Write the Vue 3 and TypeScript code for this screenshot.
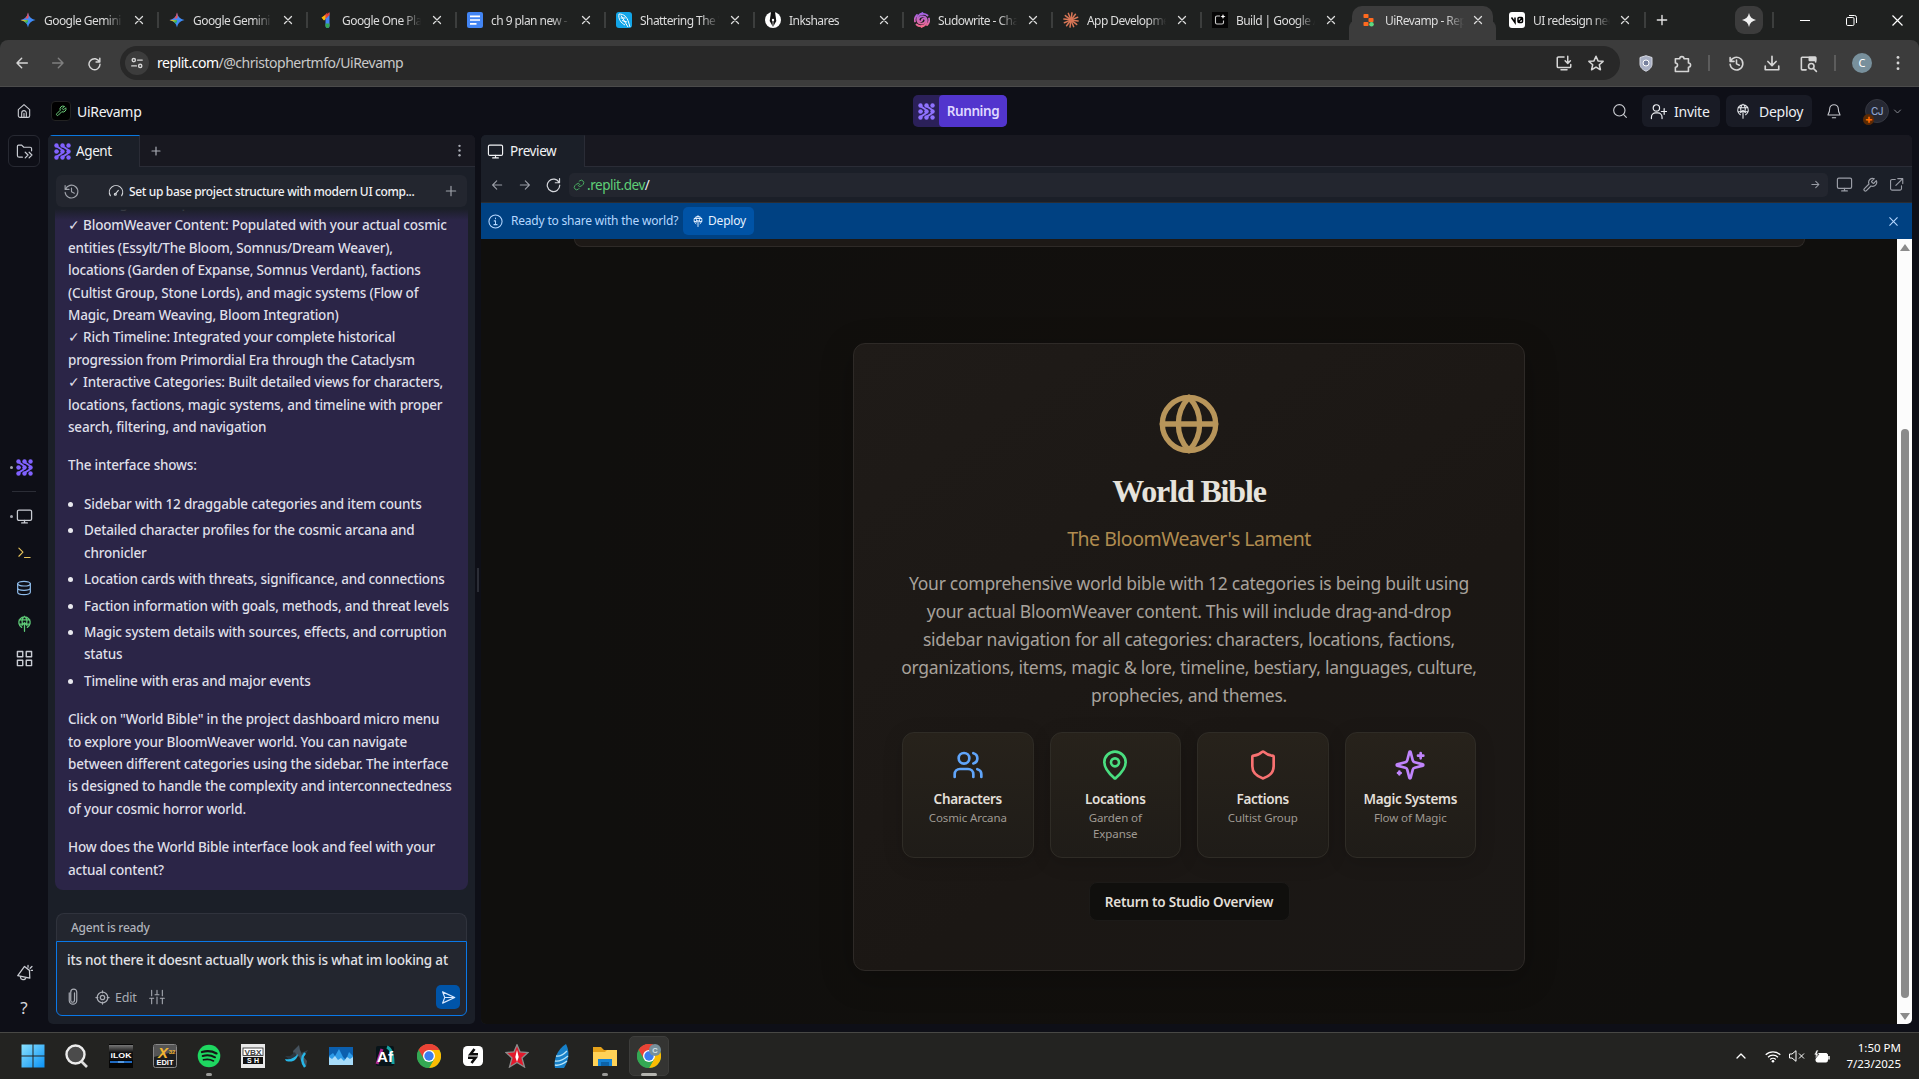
<script setup lang="ts">
import { h, type FunctionalComponent } from 'vue'

const paths: Record<string, string> = {
  x: '<path d="M5 5l14 14M19 5L5 19"/>',
  plus: '<path d="M12 4v16M4 12h16"/>',
  back: '<path d="M20 12H5M11.500 5L4.500 12l7 7"/>',
  fwd: '<path d="M4 12h15M12.500 5l7 7-7 7"/>',
  reload: '<path d="M20.500 3.500v6h-6M20 9.500A8.800 8.800 0 1 0 20.800 13"/>',
  dots: '<g fill="currentColor" stroke="none"><circle cx="12" cy="4.500" r="1.900"/><circle cx="12" cy="12" r="1.900"/><circle cx="12" cy="19.500" r="1.900"/></g>',
  tune: '<circle cx="6.500" cy="7" r="2.800"/><path d="M13 7h8M3 17h8"/><circle cx="17.500" cy="17" r="2.800"/>',
  install: '<path d="M12 4H4.500A1.500 1.500 0 0 0 3 5.500v11A1.500 1.500 0 0 0 4.500 18h15a1.500 1.500 0 0 0 1.500-1.500V14M8 21h8M17 3v9M13.500 9l3.500 3.500L20.500 9"/>',
  star: '<path d="M12 3l2.700 6.200 6.800.6-5.100 4.500 1.500 6.700-5.900-3.500L6.100 21l1.500-6.700-5.100-4.500 6.800-.6z"/>',
  puzzle: '<path d="M3 6h5.500a2.700 2.700 0 1 1 5.400 0h5.600v5.300a2.700 2.700 0 1 1 0 5.400V22H3v-5.300a2.700 2.700 0 1 0 0-5.400z"/>',
  history: '<path d="M3 3.500v5.500h5.500M3.500 9A9 9 0 1 1 3 13M12 7v5.500l4 2"/>',
  download: '<path d="M12 3v12M6.500 10l5.500 5.500L17.500 10M3 16v5h18v-5"/>',
  lens: '<path d="M9 20H4a1 1 0 0 1-1-1V5a1 1 0 0 1 1-1h16a1 1 0 0 1 1 1v5"/><path fill="currentColor" d="M13 4h8v4h-8z"/><circle cx="15.500" cy="15.500" r="3.500"/><path d="M18 18l4 4"/>',
  home: '<path d="M3.500 10L12 2.500l8.500 7.500v9a2.500 2.500 0 0 1-2.500 2.500H6A2.500 2.500 0 0 1 3.500 19zM8.500 21.500V15a3.500 3.500 0 0 1 7 0v6.500M12 15.500v6"/>',
  wrench: '<path d="M14.700 6.300a1 1 0 0 0 0 1.400l1.600 1.600a1 1 0 0 0 1.400 0l3.770-3.770a6 6 0 0 1-7.940 7.940l-6.910 6.910a2.120 2.120 0 0 1-3-3l6.910-6.910a6 6 0 0 1 7.940-7.940z"/>',
  search: '<circle cx="11" cy="11" r="8.500"/><path d="M17.500 17.500L21.500 21.500"/>',
  invite: '<circle cx="9" cy="7" r="4.500"/><path d="M2 22v-2a6 6 0 0 1 6-6h3a6 6 0 0 1 6 6v2M20 8v8M16 12h8"/>',
  deploy: '<path d="M8 17.500a8 8 0 1 1 8 0M4.500 7h15M4.500 13h4M15.500 13h4M9 12c-1-4 0-8 3-10M15 12c1-4 0-8-3-10M12 23V11M8.500 14.500L12 11l3.500 3.500"/>',
  bell: '<path d="M5.500 9a6.500 6.500 0 0 1 13 0c0 6 2.500 7 2.500 9H3C3 16 5.500 15 5.500 9M9.500 22h5"/>',
  down: '<path d="M4 8l8 8 8-8"/>',
  up: '<path d="M4 16l8-8 8 8"/>',
  folder: '<path d="M9 20H4.500A2.500 2.500 0 0 1 2 17.500v-13A1.500 1.500 0 0 1 3.500 3H8l3 3h9a2 2 0 0 1 2 2v3M13 13l4 4-4 4M18.500 13l4 4-4 4"/>',
  monitor: '<rect x="2" y="3" width="20" height="14.500" rx="2"/><path d="M12 17.500V21M8 21h8"/>',
  shell: '<path d="M3 5l6.500 6.500L3 18M12 20h9"/>',
  db: '<ellipse cx="12" cy="5.500" rx="9.500" ry="3.500"/><path d="M2.500 5.500v13c0 2 4 3.500 9.500 3.500s9.500-1.500 9.500-3.500v-13M2.500 12c0 2 4 3.500 9.500 3.500s9.500-1.500 9.500-3.500"/>',
  grid: '<path d="M2 2h7.500v7.500H2zM14.500 2H22v7.500h-7.500zM2 14.500h7.500V22H2zM14.500 14.500H22V22h-7.500z"/>',
  horn: '<path d="M12 3.500L2.500 16.500l17 3.500L19 9zM6.500 17.500a3.500 3.500 0 0 0 7.500 1.500M17 4.500V2M20 6l2.500-2.500M21.500 9H24"/>',
  gauge: '<path d="M3.500 19A10 10 0 1 1 20.500 19M11 16.500L15.500 11"/><circle cx="11" cy="16.800" r="1.500"/>',
  clip: '<path d="M7 7v10a5 5 0 0 0 10 0V6a4 4 0 0 0-8 0v11a2 2 0 0 0 5 0V7" transform="translate(0 -.5)"/>',
  target: '<circle cx="12" cy="12" r="8.500"/><circle cx="12" cy="12" r="3.500"/><path d="M12 1.500v3M12 19.500v3M1.500 12h3M19.500 12h3"/>',
  sliders: '<path d="M4 2v8M1 14h6M4 14v8M12 2v5M9 8.500h6M12 12v10M20 2v8M17 14h6M20 14v8"/>',
  send: '<path d="M2.500 3L22 12 2.500 21 6 12zM6 12h16"/>',
  link: '<path d="M10 13a5 5 0 0 0 7.500.5l3-3a5 5 0 0 0-7-7L12 5M14 11a5 5 0 0 0-7.500-.5l-3 3a5 5 0 0 0 7 7L12 19"/>',
  info: '<circle cx="12" cy="12" r="10.500"/><path d="M12 17v-6h-2M9.500 17h5M12 6.500v1"/>',
  external: '<path d="M10 4H5a2.500 2.500 0 0 0-2.500 2.500v12A2.500 2.500 0 0 0 5 21h12.500a2.500 2.500 0 0 0 2.500-2.500V14M14 2.500h8v8M22 2.500L11 13.500"/>',
  globe: '<circle cx="12" cy="12" r="10"/><path d="M12 2a14.500 14.500 0 0 0 0 20 14.500 14.500 0 0 0 0-20M2 12h20"/>',
  users: '<path d="M16 21v-2a4 4 0 0 0-4-4H6a4 4 0 0 0-4 4v2M22 21v-2a4 4 0 0 0-3-3.870M16 3.130a4 4 0 0 1 0 7.750"/><circle cx="9" cy="7" r="4"/>',
  pin: '<path d="M20 10c0 4.993-5.539 10.193-7.399 11.799a1 1 0 0 1-1.202 0C9.539 20.193 4 14.993 4 10a8 8 0 0 1 16 0"/><circle cx="12" cy="10" r="3"/>',
  shield: '<path d="M20 13c0 5-3.500 7.500-7.660 8.950a1 1 0 0 1-.67-.01C7.500 20.500 4 18 4 13V6a1 1 0 0 1 1-1c2 0 4.500-1.200 6.240-2.720a1.170 1.170 0 0 1 1.520 0C14.510 3.810 17 5 19 5a1 1 0 0 1 1 1z"/>',
  sparkles: '<path d="M9.937 15.500A2 2 0 0 0 8.500 14.063l-6.135-1.582a.5.5 0 0 1 0-.962L8.500 9.936A2 2 0 0 0 9.937 8.500l1.582-6.135a.5.5 0 0 1 .963 0L14.063 8.500A2 2 0 0 0 15.500 9.937l6.135 1.581a.5.5 0 0 1 0 .964L15.500 14.063a2 2 0 0 0-1.437 1.437l-1.582 6.135a.5.5 0 0 1-.963 0zM20 3v4M22 5h-4M4 17v2M5 18H3"/>',
  agent: '<g fill="currentColor" stroke="none"><circle cx="3.500" cy="3.500" r="3.100"/><circle cx="12" cy="3.500" r="3.100"/><circle cx="20.500" cy="3.500" r="3.100"/><circle cx="3.500" cy="12" r="3.100"/><circle cx="12" cy="12" r="3.100"/><circle cx="20.500" cy="12" r="3.100"/><circle cx="3.500" cy="20.500" r="3.100"/><circle cx="12" cy="20.500" r="3.100"/><circle cx="20.500" cy="20.500" r="3.100"/></g><path d="M3.500 3.500C6 8.500 12 7 12 12s-6 3.500-8.500 8.500M12 3.500c2.500 5 8.500 3.500 8.500 8.500s-6 3.500-8.500 8.500M3.500 12h2"/>',
}
const Ico: FunctionalComponent<{ n: string; s?: number; w?: number }> = (p) =>
  h('svg', {
    width: p.s ?? 16, height: p.s ?? 16, viewBox: '0 0 24 24', fill: 'none', stroke: 'currentColor',
    'stroke-width': p.w ?? 1.6, 'stroke-linecap': 'round', 'stroke-linejoin': 'round',
    style: 'display:block;flex:none', innerHTML: paths[p.n],
  })
Ico.props = ['n', 's', 'w']

const gem = '<defs><linearGradient id="gm" x1="0" y1="0" x2="1" y2="1"><stop offset="0.15" stop-color="#f04a50"/><stop offset=".35" stop-color="#4c86f5"/><stop offset=".7" stop-color="#3b8cf7"/><stop offset="1" stop-color="#3b8cf7"/></linearGradient><linearGradient id="gn" x1="0" y1=".3" x2=".6" y2="1"><stop offset="0" stop-color="#fbc31b"/><stop offset=".6" stop-color="#1fae68"/><stop offset=".85" stop-color="#3b8cf7" stop-opacity="0"/></linearGradient></defs><path fill="url(#gm)" d="M8 .5C9 5 11 7 15.500 8 11 9 9 11 8 15.500 7 11 5 9 .5 8 5 7 7 5 8 .5"/><path fill="url(#gn)" d="M.5 8H8v7.500C7 11 5 9 .5 8"/><path fill="#ee4d50" d="M8 .5C9 5 8.500 6 8 6.500L5 6.500C6.500 5.500 7.500 3.500 8 .5"/>'
const rays = Array.from({ length: 12 }, (_, i) => `<path transform="rotate(${i * 30 + 8} 8 8)" d="M8 7V.8"/>`).join('')
const fav: Record<string, string> = {
  gem,
  one: '<path fill="#ea4335" d="M4 5.500L9.500.5 8 6 5.500 8z"/><path fill="#fbbc04" d="M3.500 5.500l4-2.500 1.500 3-3 2.500z"/><path fill="#4285f4" d="M7.500 5L11.500.5V14a2 2 0 0 1-4 0z"/><path fill="#34a853" d="M7.500 11.500h4V14a2 2 0 0 1-4 0z"/><path fill="#ea4335" d="M7.500 3.500l4-3.500v3l-4 4z"/>',
  doc: '<rect width="16" height="16" rx="2" fill="#4285f4"/><path stroke="#fff" stroke-width="1.700" d="M3 4.300h10M3 8h10M3 11.800h6.500"/>',
  feather: '<rect width="16" height="16" rx="3" fill="#12a5e8"/><path d="M3 2c5 0 8 3 9.500 8L14 15M3 2c-1 5 2 9 6 11M5 3.500L12 15M6 8.500l5 1.500M4.500 6h5" stroke="#fff" fill="none"/>',
  ink: '<circle cx="8" cy="8" r="8" fill="#fff"/><path d="M6 0h4l1.300 9L8 15 4.700 9z" fill="#111"/><circle cx="8" cy="8" r="1.200" fill="#fff"/><path d="M8 9v6" stroke="#fff" stroke-width=".7"/>',
  sudo: '<defs><linearGradient id="sd" gradientUnits="userSpaceOnUse" x1="8" y1="0" x2="8" y2="16"><stop stop-color="#9a62f2"/><stop offset="1" stop-color="#ff6b83"/></linearGradient></defs><g fill="none" stroke="url(#sd)" stroke-width="1.800" stroke-linecap="round"><path d="M8 8c0-2 3.500-2 3.500.6C11.500 12 5 13 3.500 9 2.500 5.500 5 2.500 8.500 1"/><path d="M8 8c0 2-3.500 2-3.500-.6C4.500 4 11 3 12.500 7 13.500 10.500 11 13.500 7.500 15"/><path d="M2.500 12.500c2 1.800 4.500 2 7 .9M13.500 3.500c-2-1.800-4.500-2-7-.9M15 6.500c.6 2 0 4.500-2 6.500M1 9.500c-.6-2 0-4.500 2-6.500"/></g>',
  claude: `<g stroke="#d97757" stroke-width="1.500" stroke-linecap="round">${rays}</g>`,
  build: '<rect width="16" height="16" fill="#050505"/><path d="M8 4H5a1.500 1.500 0 0 0-1.500 1.500v5A1.500 1.500 0 0 0 5 12h5a1.500 1.500 0 0 0 1.500-1.500V8.500" stroke="#ccc" fill="none" stroke-width="1.100"/><path fill="#fff" d="M11 2l.7 1.800 1.800.7-1.800.7L11 7l-.7-1.800-1.800-.7 1.800-.7z"/>',
  replit: '<rect x="2.500" y="2" width="5" height="4" rx=".8" fill="#ff6a1f"/><rect x="7.500" y="6" width="5" height="4" rx=".8" fill="#ff6a1f"/><rect x="2.500" y="10" width="5" height="4" rx=".8" fill="#ff6a1f"/><circle cx="10.500" cy="12.200" r="2.300" fill="#5fd981"/>',
  v0: '<rect width="16" height="16" rx="3" fill="#fff"/><path d="M2.500 5.500L6 10.500V5.500M9 6.500A1 1 0 0 1 10 5.500h2.500A1 1 0 0 1 13.500 6.500v3A1 1 0 0 1 12.500 10.500H10A1 1 0 0 1 9 9.500zM9.500 10l3.500-4" stroke="#000" stroke-width="1.500" fill="none"/>',
}
const tabs = [
  { f: 'gem', t: 'Google Gemini' }, { f: 'gem', t: 'Google Gemini' }, { f: 'one', t: 'Google One Plans' },
  { f: 'doc', t: 'ch 9 plan new - G' }, { f: 'feather', t: 'Shattering The V' }, { f: 'ink', t: 'Inkshares' },
  { f: 'sudo', t: 'Sudowrite - Chat' }, { f: 'claude', t: 'App Development' }, { f: 'build', t: 'Build | Google A' },
  { f: 'replit', t: 'UiRevamp - Rep' }, { f: 'v0', t: 'UI redesign need' },
]

const intro = [
  'with drag-and-drop',
  '✓ BloomWeaver Content: Populated with your actual cosmic', 'entities (Essylt/The Bloom, Somnus/Dream Weaver),',
  'locations (Garden of Expanse, Somnus Verdant), factions', '(Cultist Group, Stone Lords), and magic systems (Flow of',
  'Magic, Dream Weaving, Bloom Integration)', '✓ Rich Timeline: Integrated your complete historical',
  'progression from Primordial Era through the Cataclysm', '✓ Interactive Categories: Built detailed views for characters,',
  'locations, factions, magic systems, and timeline with proper', 'search, filtering, and navigation',
]
const bullets = [
  ['Sidebar with 12 draggable categories and item counts'],
  ['Detailed character profiles for the cosmic arcana and', 'chronicler'],
  ['Location cards with threats, significance, and connections'],
  ['Faction information with goals, methods, and threat levels'],
  ['Magic system details with sources, effects, and corruption', 'status'],
  ['Timeline with eras and major events'],
]
const outro = [
  'Click on "World Bible" in the project dashboard micro menu', 'to explore your BloomWeaver world. You can navigate',
  'between different categories using the sidebar. The interface', 'is designed to handle the complexity and interconnectedness',
  'of your cosmic horror world.',
]
const question = ['How does the World Bible interface look and feel with your', 'actual content?']
const about = [
  'Your comprehensive world bible with 12 categories is being built using',
  'your actual BloomWeaver content. This will include drag-and-drop',
  'sidebar navigation for all categories: characters, locations, factions,',
  'organizations, items, magic & lore, timeline, bestiary, languages, culture,',
  'prophecies, and themes.',
]
const cards = [
  { i: 'users', c: '#60a5fa', t: 'Characters', s: ['Cosmic Arcana'] },
  { i: 'pin', c: '#4ade80', t: 'Locations', s: ['Garden of', 'Expanse'] },
  { i: 'shield', c: '#f87171', t: 'Factions', s: ['Cultist Group'] },
  { i: 'sparkles', c: '#c084fc', t: 'Magic Systems', s: ['Flow of Magic'] },
]

const chrome = '<circle cx="12" cy="12" r="12" fill="#34a853"/><path fill="#ea4335" d="M12 12L1.600 6A12 12 0 0 1 22.400 6z"/><path fill="#fbbc04" d="M12 6h10.400A12 12 0 0 1 12 24l5-9z"/><path fill="#ea4335" d="M1.600 6A12 12 0 0 1 22.400 6H12l-5.200 9z"/><path fill="#34a853" d="M1.600 6A12 12 0 0 0 12 24l5.200-9H6.800z"/><circle cx="12" cy="12" r="6" fill="#fff"/><circle cx="12" cy="12" r="4.700" fill="#3b7df0"/>'
const sans = 'font-family="Liberation Sans, sans-serif" font-weight="700" text-anchor="middle"'
const apps: { svg: string; run?: boolean; on?: boolean }[] = [
  { svg: '<defs><linearGradient id="w" x2="1" y2="1"><stop stop-color="#8ae2ff"/><stop offset="1" stop-color="#0a91f5"/></linearGradient></defs><path fill="url(#w)" d="M.5.5h11v11H.5zM12.500.5h11v11h-11zM.5 12.500h11v11H.5zM12.500 12.500h11v11h-11z"/>' },
  { svg: '<circle cx="10.500" cy="10.500" r="9" fill="#4b4b4b" stroke="#ececec" stroke-width="2.400"/><path d="M16.500 17.500l5.500 5.500" stroke="#ddd" stroke-width="2.600"/>' },
  { svg: `<defs><linearGradient id="il" x2="0" y2="1"><stop stop-color="#777"/><stop offset=".5" stop-color="#111"/></linearGradient></defs><path fill="#050505" d="M0 0h24v24H0z"/><path fill="url(#il)" d="M0 1h24v15H0z"/><text x="12" y="13.500" font-size="8" textLength="21" lengthAdjust="spacingAndGlyphs" fill="#fff" ${sans}>iLOK</text><path stroke="#2376d8" stroke-width="1.800" d="M1 18h22"/><path stroke="#8ec9ff" d="M9 18h6"/>` },
  { svg: `<rect x=".5" y=".5" width="23" height="23" rx="2" fill="#1c1d1f" stroke="#888"/><path d="M1 1h22v6L1 13z" fill="#555"/><text x="10" y="14" font-size="15" font-style="italic" fill="#f2b632" ${sans}>X</text><text x="19" y="9.500" font-size="6" fill="#f2b632" ${sans}>32</text><text x="12" y="20.500" font-size="7" textLength="17" lengthAdjust="spacingAndGlyphs" fill="#fff" ${sans}>EDIT</text>` },
  { svg: '<circle cx="12" cy="12" r="11.300" fill="#1ed760"/><g fill="none" stroke="#151515" stroke-linecap="round"><path stroke-width="2.300" d="M5 8c5-1.400 10.500-.8 14.500 1.400"/><path stroke-width="2" d="M5.700 12c4.500-1.200 8.800-.6 12.300 1.300"/><path stroke-width="1.700" d="M6.500 15.800c3.500-.9 7-.5 10 1.100"/></g>', run: true },
  { svg: `<path fill="#e9e9e9" d="M0 0h24v24H0z"/><rect x="2" y="4" width="20" height="7.500" fill="#fff" stroke="#222" stroke-width=".8"/><text x="12" y="10.500" font-size="8" textLength="17" lengthAdjust="spacingAndGlyphs" fill="#444" ${sans}>VBX</text><path fill="#111" d="M2 13h20v7H2z"/><text x="12" y="19" font-size="7" textLength="12" fill="#fff" ${sans}>SH</text>` },
  { svg: '<path fill="#45525d" d="M8 7l6-6 1 5 3 6 4 5-1 6-5-6-2-5-4 2z"/><path fill="#34414b" d="M16 9l7-3-5 8z"/><path fill="#2b3740" d="M0 12h5l5-4 2 5-6 4z"/><path fill="#26b7e8" d="M0 15c6 1 9-1 13-5-1 6-5 9-12 7z"/><path d="M20 9c-3.500 4-3.500 9 0 14" stroke="#26b7e8" stroke-width="2.400" fill="none"/>' },
  { svg: '<path fill="#0b5fae" d="M0 3h24v18H0z"/><path fill="#2d9be8" d="M0 12l4-3 2 3 4-7 4 8 3 3 3-8 4 4v9H0z"/><path fill="#a7dcfa" d="M0 13l3 2 3-3 3 4 3-2 3 3 3-4 3 2 3-2v8H0z"/>' },
  { svg: `<rect x="3" y="2" width="18" height="20" rx="2" fill="#071419"/><path stroke="#b0268f" stroke-width="3" d="M4 20l5-15"/><path stroke="#17a5a5" stroke-width="3" fill="none" d="M14 3c5 2 6 9 6 17"/><text x="12" y="17.500" font-size="15" textLength="16" lengthAdjust="spacingAndGlyphs" fill="#fff" ${sans}>Af</text>` },
  { svg: chrome },
  { svg: '<rect x="2" y="2" width="20" height="20" rx="4.500" fill="#fff"/><path d="M13.500 5L9.500 10.200H17M10.500 19L14.500 13.800H7" stroke="#0c0c0c" stroke-width="2.600" fill="none"/>' },
  { svg: '<path fill="#e3182b" stroke="#8d8d8d" stroke-width="1.300" d="M12 .8l3 7 8 .7-6 5.500 2.500 9-7.500-4.500L4.500 23 7 14 1 8.500l8-.7z"/><path fill="#fff" d="M12 6l1.700 7-1.700 5-1.700-5z"/>' },
  { svg: '<path fill="#1780c9" d="M17 0c4 8 3 16-2 24H6C4 17 8 5 17 0"/><path d="M7 12c4 1 7-1 11-5M6 17c4 1 8-1 13-5M6 21c4 1 8-1 12-4" stroke="#b7e3f7" stroke-width="1.300" fill="none"/>' },
  { svg: '<path fill="#e6a21a" d="M0 3h8l3 3h10v5H0z"/><path fill="#ffd257" d="M0 8h12l2-2h10v16H0z"/><path fill="#1583d6" d="M5 15h14v7H5z"/><path fill="#0d63a8" d="M8 18h8v4H8z"/>', run: true },
  { svg: chrome + `<circle cx="18" cy="6" r="6" fill="#78909c"/><text x="18" y="8.700" font-size="7.500" fill="#d7e2e8" ${sans}>C</text>`, on: true },
]
</script>

<template>
  <div class="screen">
    <header class="tabstrip">
      <div v-for="(t, k) in tabs" :key="k" class="tab" :class="{ active: k === 9, nosep: k === 8 || k === 9, end: k === 10 }">
        <svg class="fav" viewBox="0 0 16 16" v-html="fav[t.f]" />
        <span class="tabtext">{{ t.t }}</span>
        <Ico n="x" :s="12" :w="2.6" />
      </div>
      <div class="newtab"><Ico n="plus" :s="14" :w="2.4" /></div>
      <div class="grow" />
      <div class="spark"><svg width="14" height="14" viewBox="0 0 16 16"><path fill="#f1f1f1" d="M8 0c1 4.500 3.500 7 8 8-4.500 1-7 3.500-8 8-1-4.500-3.500-7-8-8 4.500-1 7-3.500 8-8" /></svg></div>
      <i class="tsep" />
      <div class="win"><svg width="10" height="10"><path d="M0 5.500h10" stroke="#fff" /></svg></div>
      <div class="win"><svg width="11" height="11" fill="none" stroke="#fff"><rect x=".5" y="2.500" width="7.500" height="8" rx="1.200" /><path d="M3 .5h5.500a2 2 0 0 1 2 2V8" /></svg></div>
      <div class="win last"><svg width="11" height="11" stroke="#fff" stroke-width="1.200"><path d="M.5.5l10 10M10.500.5l-10 10" /></svg></div>
    </header>

    <div class="toolbar">
      <div class="tb"><Ico n="back" :s="16" :w="2.2" /></div>
      <div class="tb dim"><Ico n="fwd" :s="16" :w="2.2" /></div>
      <div class="tb"><Ico n="reload" :s="15" :w="2.3" /></div>
      <div class="omni">
        <div class="site"><Ico n="tune" :s="14" :w="2.4" /></div>
        <span class="url"><b>replit.com</b>/@christophertmfo/UiRevamp</span>
        <div class="grow" />
        <div class="oi"><Ico n="install" :s="18" :w="2" /></div>
        <div class="oi"><Ico n="star" :s="18" :w="2" /></div>
      </div>
      <div class="tb first"><svg width="14" height="17" viewBox="0 0 14 17"><path fill="#a9b0c4" stroke="#d6d9e2" d="M7 .7L13 2.500V9c0 3.500-3 6-6 7.200C4 15 1 12.500 1 9V2.500z" /><circle cx="7" cy="8" r="3" fill="#76809d" stroke="#fff" /></svg></div>
      <div class="tb"><Ico n="puzzle" :s="19" :w="2" /></div>
      <i class="bsep" />
      <div class="tb"><Ico n="history" :s="17" :w="2.200" /></div>
      <div class="tb"><Ico n="download" :s="18" :w="2.200" /></div>
      <div class="tb"><Ico n="lens" :s="19" :w="2" /></div>
      <i class="bsep" />
      <div class="tb"><span class="me">C</span></div>
      <div class="tb"><Ico n="dots" :s="18" /></div>
    </div>

    <main class="replit">
      <div class="top">
        <div class="topl">
          <Ico n="home" :s="16" :w="1.7" />
          <span class="appicon"><Ico n="wrench" :s="12" :w="2" /></span>
          <span class="appname">UiRevamp</span>
        </div>
        <div class="running"><span class="ragent"><Ico n="agent" :s="17" :w="2.6" /></span><span class="rtext">Running</span></div>
        <div class="topr">
          <div class="srch"><Ico n="search" :s="16" :w="1.7" /></div>
          <div class="btn inv"><Ico n="invite" :s="17" :w="1.7" /><span>Invite</span></div>
          <div class="btn dep"><Ico n="deploy" :s="16" :w="1.6" /><span>Deploy</span></div>
          <div class="bell"><Ico n="bell" :s="16" :w="1.6" /></div>
          <div class="avatar">CJ<em>+</em></div>
          <Ico n="down" :s="9" :w="2.6" class="chev" />
        </div>
      </div>

      <div class="body">
        <nav class="rail">
          <div class="fold"><Ico n="folder" :s="17" :w="1.7" /></div>
          <div class="r1"><i class="pip" /><span class="purple"><Ico n="agent" :s="17" :w="2.6" /></span></div>
          <i class="rline" />
          <div class="ri"><i class="pip" /><Ico n="monitor" :s="17" :w="1.8" /></div>
          <div class="ri yel"><Ico n="shell" :s="15" :w="1.8" /></div>
          <div class="ri blu"><Ico n="db" :s="16" :w="1.8" /></div>
          <div class="ri grn"><Ico n="deploy" :s="17" :w="1.8" /></div>
          <div class="ri gr"><Ico n="grid" :s="17" :w="2" /></div>
          <div class="grow" />
          <div class="ri hn"><Ico n="horn" :s="17" :w="1.8" /></div>
          <div class="ri q">?</div>
        </nav>

        <section class="agent">
          <div class="phead">
            <div class="ptab"><span class="purple"><Ico n="agent" :s="17" :w="2.6" /></span><span class="pt">Agent</span></div>
            <div class="prest"><Ico n="plus" :s="12" :w="2.4" /><div class="grow" /><Ico n="dots" :s="15" /></div>
          </div>
          <div class="thread"><Ico n="history" :s="17" :w="1.6" /><Ico n="gauge" :s="16" :w="1.7" class="gg" /><span>Set up base project structure with modern UI comp...</span><Ico n="plus" :s="14" :w="2" /></div>
          <div class="msg">
            <p class="intro"><span v-for="l in intro" :key="l" class="ln">{{ l }}</span></p>
            <p><span class="ln">The interface shows:</span></p>
            <ul><li v-for="(b, k) in bullets" :key="k"><span v-for="l in b" :key="l" class="ln">{{ l }}</span></li></ul>
            <p><span v-for="l in outro" :key="l" class="ln">{{ l }}</span></p>
            <p><span v-for="l in question" :key="l" class="ln">{{ l }}</span></p>
            <div class="fade" />
          </div>
          <div class="ready">Agent is ready</div>
          <div class="input">
            <div class="typed">its not there it doesnt actually work this is what im looking at</div>
            <div class="tools">
              <Ico n="clip" :s="18" :w="1.6" />
              <Ico n="target" :s="15" :w="2" class="tg" /><span>Edit</span>
              <Ico n="sliders" :s="16" :w="1.6" class="sl" />
              <div class="grow" />
              <div class="send"><Ico n="send" :s="15" :w="1.8" /></div>
            </div>
          </div>
        </section>
        <div class="gutter"><i /></div>

        <section class="preview">
          <div class="phead">
            <div class="ptab pv"><Ico n="monitor" :s="17" :w="1.6" /><span class="pt">Preview</span></div>
            <div class="prest" />
          </div>
          <div class="nav">
            <div class="n1"><Ico n="back" :s="14" :w="1.9" /></div><div class="n1"><Ico n="fwd" :s="14" :w="1.9" /></div><div class="n1 lit"><Ico n="reload" :s="17" :w="1.7" /></div>
            <div class="addr"><Ico n="link" :s="12" :w="1.8" /><span>.replit.dev<b>/</b></span><div class="grow" /><Ico n="fwd" :s="11" :w="2.2" class="go" /></div>
            <div class="n2"><Ico n="monitor" :s="17" :w="1.7" /></div><div class="n2"><Ico n="wrench" :s="16" :w="1.8" /></div><div class="n2"><Ico n="external" :s="15" :w="1.8" /></div>
          </div>
          <div class="banner">
            <Ico n="info" :s="15" :w="1.7" /><span class="share">Ready to share with the world?</span>
            <div class="bdep"><Ico n="deploy" :s="12" :w="1.9" />Deploy</div>
            <div class="grow" /><Ico n="x" :s="13" :w="2" />
          </div>
          <div class="view">
            <div class="page">
              <div class="above" />
              <article class="bible">
                <Ico n="globe" :s="64" :w="2" class="gold" />
                <h1>World Bible</h1>
                <h2>The BloomWeaver's Lament</h2>
                <p><span v-for="l in about" :key="l">{{ l }}</span></p>
                <div class="cards">
                  <div v-for="c in cards" :key="c.t" class="card">
                    <Ico :n="c.i" :s="32" :w="2" :style="{ color: c.c }" />
                    <strong>{{ c.t }}</strong>
                    <small v-for="s in c.s" :key="s">{{ s }}</small>
                  </div>
                </div>
                <button>Return to Studio Overview</button>
              </article>
            </div>
            <div class="scroll"><i class="au" /><i class="thumb" /><i class="ad" /></div>
          </div>
        </section>
      </div>
    </main>

    <footer class="taskbar">
      <div v-for="(a, k) in apps" :key="k" class="app" :class="{ on: a.on, run: a.run }"><svg width="24" height="24" viewBox="0 0 24 24" v-html="a.svg" /></div>
      <div class="grow" />
      <Ico n="up" :s="12" :w="2.6" class="tup" />
      <svg class="wifi" width="16" height="13" viewBox="0 0 16 13" fill="none" stroke="#fff" stroke-width="1.200"><path d="M.7 4.800a10.500 10.500 0 0 1 14.600 0M3 7.200a7.200 7.200 0 0 1 10 0M5.200 9.500a4 4 0 0 1 5.600 0" /><circle cx="8" cy="11.200" r="1.300" fill="#fff" stroke="none" /></svg>
      <svg class="vol" width="16" height="12" viewBox="0 0 16 12" fill="none" stroke="#fff"><path d="M.5 4v4H3l4 3.300V.7L3 4zM10 3.500l5 5M15 3.500l-5 5" /></svg>
      <svg class="bat" width="17" height="13" viewBox="0 0 17 13"><rect x="3" y="3.500" width="11.500" height="8.500" rx="1.500" fill="#fff" stroke="#fff" /><path d="M16 6v3.500" stroke="#fff" stroke-width="1.500" /><path d="M3.500 0L1 5h2L2 9l4-5H4l1.500-4z" fill="#fff" stroke="#232321" stroke-width=".7" /></svg>
      <div class="clock"><span>1:50 PM</span><span>7/23/2025</span></div>
    </footer>
  </div>
</template>

<style>
body { margin: 0; background: #0e0f17; overflow: hidden; }
</style>
<style scoped>
* { box-sizing: border-box; }
i, em { font-style: normal; display: block; }
.screen { width: 1919px; height: 1079px; display: flex; flex-direction: column; overflow: hidden; font-family: 'Noto Sans', 'Open Sans', sans-serif; color: #e3e3e3; white-space: nowrap; }
.grow { flex: 1; }
.tabstrip { height: 40px; flex: none; background: #1f2120; display: flex; align-items: center; padding-left: 9px; }
.tab { width: 149px; height: 34px; margin-top: 6px; padding: 0 0 6px 11px; display: flex; align-items: center; position: relative; flex: none; color: #dcdcdc; }
.tab::after { content: ''; position: absolute; right: -1px; top: 6px; width: 2px; height: 16px; background: #3c3e3d; }
.tab.nosep::after { display: none; }
.tab.active { z-index: 1; width: 148px; }
.tab.active::before { content: ''; position: absolute; z-index: -1; left: 2px; right: 5px; top: 0; bottom: 0; background: #3c3c3c; border-radius: 10px 10px 0 0; box-shadow: -5px 12px 0 -2px #3c3c3c, 5px 12px 0 -2px #3c3c3c; clip-path: inset(0 -8px 0 -8px); }
.fav { width: 16px; height: 16px; flex: none; }
.tabtext { width: 80px; margin: 0 9px 0 8px; font-size: 12px; letter-spacing: -0.55px; overflow: hidden; -webkit-mask-image: linear-gradient(90deg, #000 76%, transparent 99%); mask-image: linear-gradient(90deg, #000 76%, transparent 99%); }
.active .tabtext { margin-right: 7px; }
.tab.end { width: 147px; }
.end .tabtext { width: 78px; margin-right: 8px; }
.newtab { width: 30px; display: flex; justify-content: center; margin-left: 2px; }
.spark { width: 28px; height: 28px; border-radius: 9px; background: #3c3c3c; display: flex; align-items: center; justify-content: center; }
.tsep { width: 2px; height: 16px; background: #3c3e3d; margin: 0 8px 0 9px; }
.win { width: 46px; display: flex; justify-content: center; }
.win.last { margin-right: -1px; }
.toolbar { height: 47px; flex: none; background: #3c3c3c; border-bottom: 1px solid #4b4b4b; display: flex; align-items: center; padding-left: 4px; border-radius: 8px 8px 0 0; color: #d6d6d6; box-shadow: 0 -8px 0 #1f2120; position: relative; clip-path: inset(0); }
.screen { background: #1f2120; }
.tb { width: 36px; flex: none; display: flex; justify-content: center; }
.tb.dim { color: #7f7f7f; }
.tb.first { margin-left: 8px; }
.omni { width: 1500px; height: 34px; margin-left: 8px; border-radius: 17px; background: #282828; display: flex; align-items: center; padding: 0 8px 0 5px; flex: none; }
.site { width: 24px; height: 24px; border-radius: 12px; background: #3c3c3c; display: flex; align-items: center; justify-content: center; }
.url { margin-left: 8px; font-size: 14px; line-height: 20px; margin-bottom: 1px; color: #c9c9c9; letter-spacing: -0.48px; }
.url b { font-weight: 400; color: #fff; }
.oi { width: 32px; display: flex; justify-content: center; }
.bsep { width: 2px; height: 16px; background: #5c5c5c; margin: 0 8px; }
.me { width: 20px; height: 20px; border-radius: 10px; background: #78909c; color: #fff; font-size: 11px; line-height: 20px; text-align: center; }
.replit { height: 945px; flex: none; background: #0e0f17; display: flex; flex-direction: column; padding-right: 7px; }
.top { height: 48px; display: flex; justify-content: space-between; align-items: center; font-size: 14px; }
.topl { width: 450px; display: flex; align-items: center; padding-left: 16px; color: #c8cad0; }
.appicon { width: 20px; height: 20px; border-radius: 4px; background: #000; border: 1px solid #222; margin: 0 6px 0 19px; color: #6fd37f; display: flex; align-items: center; justify-content: center; }
.appname { color: #f2f3f5; font-size: 14px; letter-spacing: -0.3px; }
.running { display: flex; height: 32px; width: 94px; margin-left: 463px; margin-right: auto; flex: none; border-radius: 5px; overflow: hidden; background: #2b2059; }
.ragent { width: 26px; color: #8f72ff; padding-left: 1px; display: flex; align-items: center; justify-content: center; }
.rtext { flex: 1; background: #5235cd; border-radius: 4px; font-weight: 600; font-size: 13.500px; line-height: 33px; text-align: center; color: #dfd8ff; letter-spacing: -0.4px; }
.topr { display: flex; align-items: center; color: #c8cad0; flex: none; width: 300px; }
.srch { width: 30px; }
.btn { height: 32px; border-radius: 6px; background: #191b25; display: flex; align-items: center; gap: 7px; padding-left: 8px; color: #eceef2; flex: none; letter-spacing: -0.25px; }
.inv { width: 78px; margin-right: 6px; }
.dep { width: 86px; padding-left: 9px; gap: 8px; }
.bell { width: 53px; padding-left: 14px; }
.avatar { width: 24px; height: 24px; border-radius: 12px; background: #262833; border: 1px solid #34363f; color: #8fa3cc; font: 500 10px/22px 'Inter', sans-serif; letter-spacing: -0.5px; text-align: center; position: relative; flex: none; }
.avatar em { position: absolute; left: -3px; bottom: -3px; width: 11px; height: 11px; line-height: 10px; border-radius: 6px; background: #5b2a05; color: #ff6a00; font-size: 12px; font-weight: 700; }
.chev { margin-left: 4px; color: #8b8e96; }
.body { display: flex; height: 889px; flex: none; }
.rail { width: 48px; display: flex; flex-direction: column; align-items: center; color: #c9ccd3; position: relative; }
.fold { width: 32px; height: 32px; border: 1px solid #272932; border-radius: 6px; display: flex; align-items: center; justify-content: center; }
.purple { color: #8162ff; display: block; }
.r1 { margin-top: 284px; height: 32px; display: flex; align-items: center; position: relative; }
.ri { height: 36px; display: flex; align-items: center; position: relative; flex: none; }
.pip { position: absolute; left: -6px; width: 3px; height: 3px; border-radius: 2px; background: #a3a6ae; }
.rline { width: 24px; height: 1px; background: #2b2d36; margin: 8px 0 6px; }
.yel { color: #e8c55b; } .blu { color: #8fbdec; } .grn { color: #5fcb78; margin-top: -1px; } .gr { margin-top: -1px; } .hn { margin-bottom: -1px; }
.q { font-size: 17px; color: #d5d7dc; margin-bottom: -1px; }
.agent { width: 427px; background: #1b1f28; border-radius: 5px; position: relative; display: flex; flex-direction: column; overflow: hidden; }
.phead { height: 32px; flex: none; display: flex; color: #f2f3f5; }
.ptab { width: 92px; background: #1b1f28; border-top: 1px solid #0a78e0; display: flex; align-items: center; gap: 5px; padding: 0 0 0 6px; font-size: 13.500px; border-right: 1px solid #2a2c36; letter-spacing: -0.4px; }
.pt { line-height: 18px; padding-bottom: 2px; }
.ptab.pv { width: 104px; border-top-color: transparent; gap: 6px; }
.prest { flex: 1; background: #181820; border-bottom: 1px solid #2a2c36; display: flex; align-items: center; padding: 0 8px 0 10px; color: #a9acb4; }
.thread { margin: 8px 8px 0; height: 32px; flex: none; border-radius: 6px; background: #23262f; display: flex; align-items: center; padding: 0 9px 0 7px; color: #a0a3ab; }
.thread .gg { margin-left: 28px; color: #d5d7dc; }
.thread span { flex: 1; margin-left: 5px; font-size: 12px; font-weight: 500; color: #f0f1f4; letter-spacing: -0.35px; }
.msg { margin: 0 7px; height: 683px; flex: none; background: #2b2547; border-radius: 0 0 8px 8px; padding: 0 13px; overflow: hidden; font-size: 13.500px; font-weight: 500; line-height: 22.400px; color: #dfdfe8; position: relative; letter-spacing: -0.2px; }
.ln { display: block; }
.msg p { margin: 0 0 16px; }
.msg .intro { margin-top: -15px; }
.msg ul { margin: 0 0 16px; padding-left: 16px; list-style: none; }
.msg li { margin-bottom: 4px; position: relative; }
.msg li:last-child { margin-bottom: 0; }
.msg li::before { content: ''; position: absolute; left: -16px; top: 9px; width: 5px; height: 5px; border-radius: 3px; background: #e8e8ee; }
.fade { position: absolute; left: 0; right: 0; top: 0; height: 13px; background: linear-gradient(#1b1f28 15%, rgba(43, 37, 71, 0)); }
.ready { margin: 23px 8px 0; height: 28px; flex: none; border: 1px solid #30333d; border-bottom: 0; border-radius: 8px 8px 0 0; background: #23262f; padding-left: 14px; line-height: 28px; font-size: 12px; letter-spacing: -0.25px; font-weight: 500; color: #b0b3bb; }
.input { margin: 0 8px; height: 75px; flex: none; border: 1px solid #0a78e8; border-radius: 0 0 6px 6px; background: #23262f; padding: 7px 6px 6px 10px; display: flex; flex-direction: column; justify-content: space-between; font-size: 13.500px; color: #e0e1e6; }
.typed { line-height: 22px; font-weight: 500; letter-spacing: -0.2px; }
.tools { display: flex; align-items: center; color: #a9acb4; font-size: 12.500px; margin-left: -3px; letter-spacing: -0.2px; }
.tg { margin: 0 5px 0 13px; } .sl { margin-left: 12px; }
.send { width: 24px; height: 24px; border-radius: 5px; background: #0054a8; color: #d9e9ff; display: flex; align-items: center; justify-content: center; }
.gutter { width: 6px; display: flex; padding: 433px 0 0 2px; }
.gutter i { width: 2px; height: 24px; background: #2b2d36; }
.preview { width: 1431px; background: #1b1f28; border-radius: 5px; overflow: hidden; display: flex; flex-direction: column; }
.nav { height: 36px; flex: none; display: flex; align-items: center; border-bottom: 1px solid #2b2c31; color: #9a9da6; padding-left: 2px; }
.n1 { width: 28px; display: flex; justify-content: center; } .n1.lit { color: #d5d7dc; }
.addr { width: 1259px; margin: 0 3px 0 2px; height: 24px; border-radius: 5px; background: #23262f; display: flex; align-items: center; padding: 0 7px 0 4px; color: #4eb866; font-size: 13.500px; }
.addr span { margin-left: 2px; color: #5fcf77; letter-spacing: -0.45px; }
.addr b { color: #eee; font-weight: 400; }
.go { color: #9a9da6; }
.n2 { width: 26px; display: flex; justify-content: center; }
.banner { height: 36px; flex: none; background: #004182; display: flex; align-items: center; padding: 0 12px 0 7px; color: #b5d7ff; font-size: 12px; line-height: 34px; }
.share { width: 166px; margin: 0 6px 0 8px; letter-spacing: -0.2px; }
.bdep { width: 71px; height: 28px; line-height: 28px; border-radius: 5px; background: #0053a6; display: flex; align-items: center; gap: 4px; padding-left: 9px; color: #e6f1ff; letter-spacing: -0.2px; }
.view { flex: 1; display: flex; min-height: 0; }
.page { flex: 1; background: radial-gradient(circle at 50% 50%, #14100d, #100f0d 75%); display: flex; flex-direction: column; align-items: center; }
.above { width: 1231px; height: 8px; flex: none; background: #1d1916; border: 1px solid #2e2a27; border-top: 0; border-radius: 0 0 12px 12px; margin-bottom: 96px; }
.bible { width: 672px; height: 628px; flex: none; border: 1px solid #2e2a27; border-radius: 12px; padding: 48px; background: linear-gradient(145deg, #1f1b18, #1b1714 60%, #1b1816); box-shadow: 0 8px 32px rgba(0, 0, 0, 0.25); display: flex; flex-direction: column; align-items: center; }
.gold { color: #b8955a; }
h1 { margin: 17px 0 16px; font-family: 'Liberation Serif', serif; font-weight: 700; font-size: 32px; line-height: 36px; letter-spacing: -1.150px; color: #e6e3dc; }
h2 { margin: 0 0 16px; font-weight: 400; font-size: 19.500px; line-height: 28px; color: #b08c50; letter-spacing: -0.5px; }
.bible p { margin: 0 0 23px; font-size: 17.500px; line-height: 28px; color: #a8a29c; text-align: center; letter-spacing: -0.28px; }
.bible p span { display: block; }
.cards { display: flex; gap: 16px; width: 574px; height: 126px; }
.card { flex: 1; border: 1px solid #2f2c26; border-radius: 12px; padding-top: 16px; display: flex; flex-direction: column; align-items: center; background: linear-gradient(#27221b, #1f1c18); box-shadow: 0 4px 20px rgba(0, 0, 0, 0.15); }
.card strong { font-weight: 600; font-size: 13.500px; line-height: 21px; margin-top: 8px; color: #e2dfd8; letter-spacing: -0.3px; }
.card small { font-size: 11.500px; line-height: 16px; color: #9f9a93; letter-spacing: -0.1px; }
.bible button { margin-top: 24px; width: 201px; height: 39px; border: 1px solid #1c1a18; border-radius: 8px; background: #100f0d; color: #e2dfd8; font: 600 13.500px 'Noto Sans', sans-serif; letter-spacing: -0.2px; padding: 0; }
.scroll { width: 15px; background: #fcfcfc; display: flex; flex-direction: column; align-items: center; }
.au { border: 5px solid transparent; border-top: 0; border-bottom: 7px solid #8b8b8b; margin-top: 5px; }
.thumb { width: 8px; height: 569px; border-radius: 4px; background: #8b8b8b; margin: 178px 0 15px; }
.ad { border: 5px solid transparent; border-bottom: 0; border-top: 7px solid #8b8b8b; }
.taskbar { height: 47px; flex: none; background: #232321; border-top: 1px solid #484845; display: flex; align-items: center; padding: 0 18px 0 13px; }
.app { width: 40px; height: 40px; margin-right: 4px; display: flex; align-items: center; justify-content: center; border-radius: 5px; position: relative; flex: none; }
.app.on { background: #343432; border: 1px solid #3d3d3b; }
.app.run::after, .app.on::after { content: ''; position: absolute; bottom: 0; left: 17px; width: 6px; height: 3px; border-radius: 2px; background: #9a9a98; }
.app.on::after { left: 11px; width: 16px; background: #b5b5b0; bottom: -1px; }
.tup { color: #fff; margin-right: 18px; } .wifi { margin-right: 8px; } .vol { margin-right: 8px; } .bat { margin-right: 17px; }
.clock { width: 54px; display: flex; flex-direction: column; align-items: flex-end; font-size: 11.500px; line-height: 16px; color: #fff; }
</style>
